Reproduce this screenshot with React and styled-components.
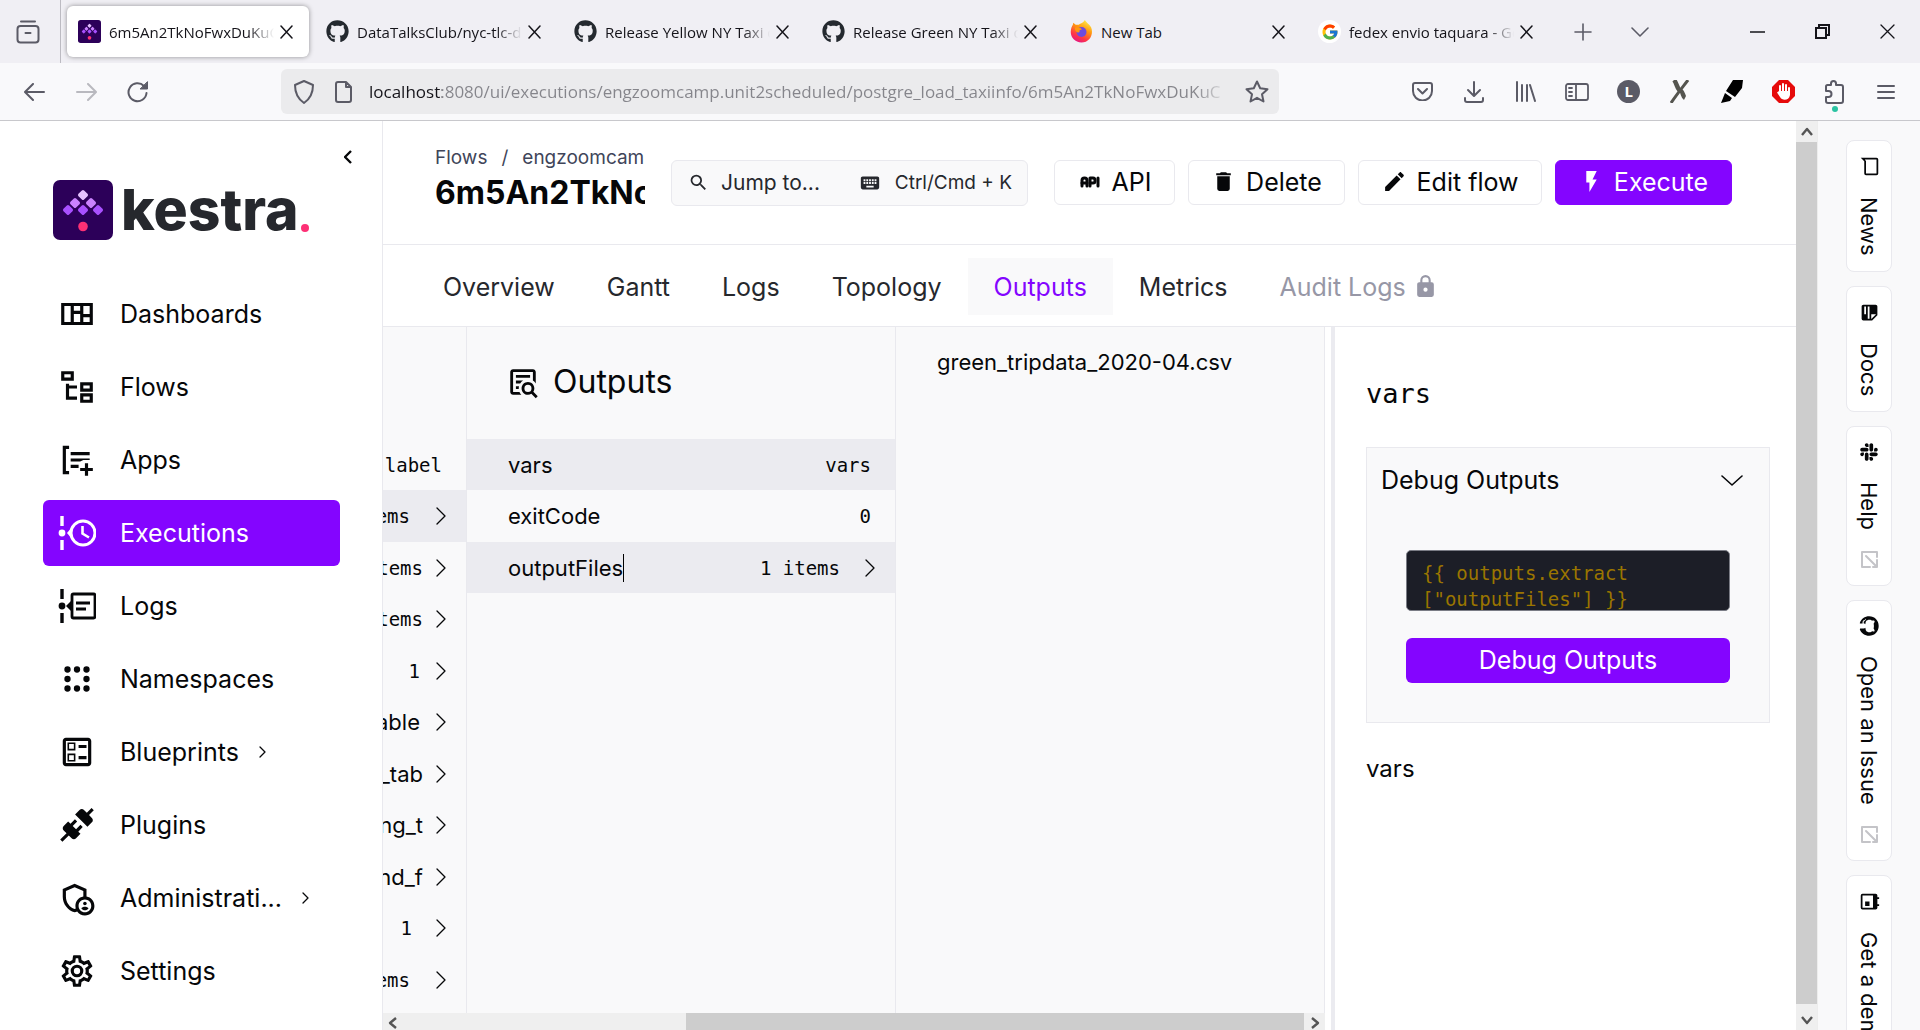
import React from "react";
import styled, { createGlobalStyle, css } from "styled-components";
import { FaGithub, FaSlack } from "react-icons/fa";
import { FcGoogle } from "react-icons/fc";
import { MdOutlineAdminPanelSettings, MdOutlineBallot } from "react-icons/md";
import { TbApi } from "react-icons/tb";

const sans = `Inter, "Liberation Sans", sans-serif`;
const mono = `"DejaVu Sans Mono", "Liberation Mono", monospace`;
const chrome = `"Open Sans", "Noto Sans", sans-serif`;

const violet = "#8405ff";
const line = "#e9e9ee";
const ink = "#060709";

const GlobalStyle = createGlobalStyle`
  *, *::before, *::after { box-sizing: border-box; }
  body { margin: 0; background: #fff; color: ${ink}; font-family: ${sans}; overflow: hidden; }
  button { font: inherit; color: inherit; background: none; border: 0; padding: 0; cursor: pointer; }
  a { color: inherit; text-decoration: none; }
  ul, ol { list-style: none; margin: 0; padding: 0; }
  h1, h2, p { margin: 0; font-weight: 400; }
  svg { display: block; flex: none; }
`;

/* ---------- icons ---------- */

const Glyph = ({ d, size = 24, box = "0 0 24 24" }) => (
  <svg width={size} height={size} viewBox={box} fill="currentColor" aria-hidden="true">
    <path d={d} />
  </svg>
);

const Stroke = ({ d, width, height, weight = 2, box, cap = "round" }) => (
  <svg
    width={width}
    height={height}
    viewBox={box || `0 0 ${width} ${height}`}
    fill="none"
    stroke="currentColor"
    strokeWidth={weight}
    strokeLinecap={cap}
    strokeLinejoin="round"
    aria-hidden="true"
  >
    <path d={d} />
  </svg>
);

const paths = {
  dashboard:
    "M2 5V19H22V5H2M4 7H8V17H4V7M10 7H14V10H10V7M16 7H20V12H16V7M10 12H14V17H10V12M16 14H20V17H16V14",
  tree:
    "M12 13H7v5h5v2H5V10h2v1h5v2M8 4v2H4V4h4m2-2H2v6h8V2m10 9v2h-4v-2h4m2-2h-8v6h8V9m-2 9v2h-4v-2h4m2-2h-8v6h8v-6z",
  apps:
    "M3 3H7V5H5V19H7V21H3V3M8 7H20V9H8V7M8 11H20V12H16L14 13H8V11M8 15H13V17H8V15M17 14H19V17H22V19H19V22H17V19H14V17H17V14Z",
  dots:
    "M6 4a2 2 0 1 1 0 4a2 2 0 0 1 0-4M12 4a2 2 0 1 1 0 4a2 2 0 0 1 0-4M18 4a2 2 0 1 1 0 4a2 2 0 0 1 0-4M6 10a2 2 0 1 1 0 4a2 2 0 0 1 0-4M18 10a2 2 0 1 1 0 4a2 2 0 0 1 0-4M6 16a2 2 0 1 1 0 4a2 2 0 0 1 0-4M12 16a2 2 0 1 1 0 4a2 2 0 0 1 0-4M18 16a2 2 0 1 1 0 4a2 2 0 0 1 0-4",
  plug:
    "M21.4 7.5C22.2 8.3 22.2 9.6 21.4 10.3L18.6 13.1L10.8 5.3L13.6 2.5C14.4 1.7 15.7 1.7 16.4 2.5L18.2 4.3L21.2 1.3L22.6 2.7L19.6 5.7L21.4 7.5M15.6 13.3L14.2 11.9L11.4 14.7L9.3 12.6L12.1 9.8L10.7 8.4L7.9 11.2L6.4 9.8L3.6 12.6C2.8 13.4 2.8 14.7 3.6 15.4L5.4 17.2L1.4 21.2L2.8 22.6L6.8 18.6L8.6 20.4C9.4 21.2 10.7 21.2 11.4 20.4L14.2 17.6L12.8 16.2L15.6 13.3Z",
  cog:
    "M12,8A4,4 0 0,1 16,12A4,4 0 0,1 12,16A4,4 0 0,1 8,12A4,4 0 0,1 12,8M12,10A2,2 0 0,0 10,12A2,2 0 0,0 12,14A2,2 0 0,0 14,12A2,2 0 0,0 12,10M10,22C9.75,22 9.54,21.82 9.5,21.58L9.13,18.93C8.5,18.68 7.96,18.34 7.44,17.94L4.95,18.95C4.73,19.03 4.46,18.95 4.34,18.73L2.34,15.27C2.21,15.05 2.27,14.78 2.46,14.63L4.57,12.97L4.5,12L4.57,11L2.46,9.37C2.27,9.22 2.21,8.95 2.34,8.73L4.34,5.27C4.46,5.05 4.73,4.96 4.95,5.05L7.44,6.05C7.96,5.66 8.5,5.32 9.13,5.07L9.5,2.42C9.54,2.18 9.75,2 10,2H14C14.25,2 14.46,2.18 14.5,2.42L14.87,5.07C15.5,5.32 16.04,5.66 16.56,6.05L19.05,5.05C19.27,4.96 19.54,5.05 19.66,5.27L21.66,8.73C21.79,8.95 21.73,9.22 21.54,9.37L19.43,11L19.5,12L19.43,13L21.54,14.63C21.73,14.78 21.79,15.05 21.66,15.27L19.66,18.73C19.54,18.95 19.27,19.04 19.05,18.95L16.56,17.95C16.04,18.34 15.5,18.68 14.87,18.93L14.5,21.58C14.46,21.82 14.25,22 14,22H10M11.25,4L10.88,6.61C9.68,6.86 8.62,7.5 7.85,8.39L5.44,7.35L4.69,8.65L6.8,10.2C6.4,11.37 6.4,12.64 6.8,13.8L4.68,15.36L5.43,16.66L7.86,15.62C8.63,16.5 9.68,17.14 10.87,17.38L11.24,20H12.76L13.13,17.39C14.32,17.14 15.37,16.5 16.14,15.62L18.57,16.66L19.32,15.36L17.2,13.81C17.6,12.64 17.6,11.37 17.2,10.2L19.31,8.65L18.56,7.35L16.15,8.39C15.38,7.5 14.32,6.86 13.12,6.62L12.75,4H11.25Z",
  search:
    "M9.5,3A6.5,6.5 0 0,1 16,9.5C16,11.11 15.41,12.59 14.44,13.73L14.71,14H15.5L20.5,19L19,20.5L14,15.5V14.71L13.73,14.44C12.59,15.41 11.11,16 9.5,16A6.5,6.5 0 0,1 3,9.5A6.5,6.5 0 0,1 9.5,3M9.5,5C7,5 5,7 5,9.5C5,12 7,14 9.5,14C12,14 14,12 14,9.5C14,7 12,5 9.5,5Z",
  keyboard:
    "M19,10H17V8H19M19,13H17V11H19M16,10H14V8H16M16,13H14V11H16M16,17H8V15H16M7,10H5V8H7M7,13H5V11H7M8,11H10V13H8M8,8H10V10H8M11,11H13V13H11M11,8H13V10H11M20,5H4C2.89,5 2,5.89 2,7V17A2,2 0 0,0 4,19H20A2,2 0 0,0 22,17V7C22,5.89 21.1,5 20,5Z",
  trash: "M19,4H15.5L14.5,3H9.5L8.5,4H5V6H19M6,19A2,2 0 0,0 8,21H16A2,2 0 0,0 18,19V7H6V19Z",
  pencil:
    "M20.71,7.04C21.1,6.65 21.1,6 20.71,5.63L18.37,3.29C18,2.9 17.35,2.9 16.96,3.29L15.12,5.12L18.87,8.87M3,17.25V21H6.75L17.81,9.93L14.06,6.18L3,17.25Z",
  flash: "M7,2V13H10V22L17,10H13L17,2H7Z",
  lock:
    "M12,17A2,2 0 0,0 14,15C14,13.89 13.1,13 12,13A2,2 0 0,0 10,15A2,2 0 0,0 12,17M18,8A2,2 0 0,1 20,10V20A2,2 0 0,1 18,22H6A2,2 0 0,1 4,20V10C4,8.89 4.9,8 6,8H7V6A5,5 0 0,1 12,1A5,5 0 0,1 17,6V8H18M12,3A3,3 0 0,0 9,6V8H15V6A3,3 0 0,0 12,3Z",
  textSearch:
    "M15.5,12C18,12 20,14 20,16.5C20,17.38 19.75,18.21 19.31,18.9L22.39,22L21,23.39L17.88,20.32C17.19,20.75 16.37,21 15.5,21C13,21 11,19 11,16.5C11,14 13,12 15.5,12M15.5,14A2.5,2.5 0 0,0 13,16.5A2.5,2.5 0 0,0 15.5,19A2.5,2.5 0 0,0 18,16.5A2.5,2.5 0 0,0 15.5,14M5,3H19C20.11,3 21,3.89 21,5V13.03C20.5,12.23 19.81,11.54 19,11V5H5V19H9.5C9.81,19.75 10.26,20.42 10.81,21H5C3.89,21 3,20.11 3,19V5C3,3.89 3.89,3 5,3M7,7H17V9H7V7M7,11H12.03C11.23,11.5 10.54,12.19 10,13H7V11M7,15H9.17C9.06,15.5 9,16 9,16.5V17H7V15Z",
  message: "M20 2H4A2 2 0 0 0 2 4V22L6 18H20A2 2 0 0 0 22 16V4A2 2 0 0 0 20 2M20 16H6L4 17.2V4H20V16Z",
  note: "M14 10H19.5L14 4.5V10M5 3H15L21 9V19A2 2 0 0 1 19 21H5C3.89 21 3 20.1 3 19V5C3 3.89 3.89 3 5 3M5 12V14H19V12H5M5 16V18H14V16H5Z",
  calendar:
    "M7 1V3H5A2 2 0 0 0 3 5V20A2 2 0 0 0 5 22H19A2 2 0 0 0 21 20V5A2 2 0 0 0 19 3H17V1H15V3H9V1H7M5 8H19V20H5V8M12 12H17V17H12V12Z",
};

const TimelineClock = () => (
  <svg width="38" height="34" viewBox="0 0 38 34" fill="none" stroke="currentColor" aria-hidden="true">
    <path d="M4 0V10M4 24V34" strokeWidth="3.4" />
    <circle cx="4" cy="17" r="3.4" fill="currentColor" stroke="none" />
    <path d="M9 17L14 11V23Z" fill="currentColor" stroke="none" />
    <circle cx="25" cy="17" r="12" strokeWidth="3" />
    <path d="M24.5 10V17.5L31 21.5" strokeWidth="2.6" />
  </svg>
);

const TimelineText = () => (
  <svg width="38" height="34" viewBox="0 0 38 34" fill="none" stroke="currentColor" aria-hidden="true">
    <path d="M4 0V10M4 24V34" strokeWidth="3.4" />
    <circle cx="4" cy="17" r="3.4" fill="currentColor" stroke="none" />
    <path d="M8 17L13 12V22Z" fill="currentColor" stroke="none" />
    <rect x="14" y="5" width="23" height="24" rx="1.5" strokeWidth="2.8" />
    <path d="M18 14H32M18 20H28" strokeWidth="2.8" />
  </svg>
);

const KestraMark = ({ size }) => (
  <svg width={size} height={size} viewBox="0 0 60 60" aria-hidden="true">
    <rect width="60" height="60" rx="7" fill="#2c0059" />
    {[
      [30, 15, "#e5c1ff"],
      [22, 23, "#cb82ff"],
      [38, 23, "#cb82ff"],
      [15, 30, "#a950ff"],
      [30, 30, "#a950ff"],
      [45, 30, "#a950ff"],
    ].map(([x, y, fill]) => (
      <rect
        key={`${x}-${y}`}
        x={x - 4}
        y={y - 4}
        width="8"
        height="8"
        rx="1.6"
        fill={fill}
        transform={`rotate(45 ${x} ${y})`}
      />
    ))}
    <circle cx="30" cy="46.500" r="4.800" fill="#fd3075" />
  </svg>
);

const FirefoxMark = () => (
  <svg width="23" height="23" viewBox="0 0 24 24" aria-hidden="true">
    <defs>
      <linearGradient id="fx-flame" x1="0.8" y1="0" x2="0.3" y2="1">
        <stop offset="0" stopColor="#fff44f" />
        <stop offset="0.4" stopColor="#ff980e" />
        <stop offset="0.75" stopColor="#ff3647" />
        <stop offset="1" stopColor="#e31587" />
      </linearGradient>
    </defs>
    <path
      d="M15.500 0C17 3 20 4 22 7.500C25 15 20.500 23.500 12 23.500C5 23.500 .5 18 .8 12C.9 9 2 6.500 3 5L3.400 2.800L6 5L9 5C11 3.500 14 3 15.500 0Z"
      fill="url(#fx-flame)"
    />
    <circle cx="12" cy="12.500" r="5.200" fill="#6d4be0" />
    <path d="M5 8C8 7 11 8 12.500 10C10 10 9.500 11.500 10 12.500C8 14 5 12 5 8Z" fill="#ff980e" />
  </svg>
);

/* ---------- browser frame ---------- */

const Shell = styled.div`
  display: flex;
  flex-direction: column;
  height: 100vh;
`;

const TabStrip = styled.div`
  display: flex;
  align-items: stretch;
  height: 63px;
  flex: none;
  background: #f0eff4;
  color: #15141a;
  font: 15px/20px ${chrome};
`;

const ViewButton = styled.button`
  display: flex;
  align-items: center;
  justify-content: center;
  width: 61px;
  padding-right: 4px;
  border-right: 1px solid #bcbbc2;
  color: #5b5b66;
`;

const TabList = styled.ul`
  display: flex;
  align-items: center;
  gap: 6px;
  padding: 0 5px 0 6px;
`;

const BrowserTab = styled.li`
  display: flex;
  align-items: center;
  width: 242px;
  height: 51px;
  padding: 0 16px 0 11px;
  gap: 8px;
  border-radius: 6px;
  ${(p) =>
    p.$active &&
    css`
      background: #fff;
      box-shadow: 0 0 5px rgba(0, 0, 0, 0.4);
    `}
`;

const TabTitle = styled.span`
  flex: 1;
  min-width: 0;
  overflow: hidden;
  white-space: nowrap;
  ${(p) =>
    p.$fade &&
    css`
      mask-image: linear-gradient(to right, #000 calc(100% - 32px), transparent calc(100% - 6px));
    `}
`;

const TabClose = styled.button`
  margin-left: -8px;
`;

const RoundIcon = styled.span`
  display: grid;
  place-items: center;
  width: 23px;
  height: 23px;
  border-radius: 50%;
  background: #fff;
`;

const StripButton = styled.button`
  display: flex;
  align-items: center;
  justify-content: center;
  width: 57px;
  color: #5b5b66;
`;

const WindowControls = styled.div`
  display: flex;
  margin-left: auto;
`;

const WindowButton = styled.button`
  display: flex;
  align-items: center;
  justify-content: center;
  width: 65px;
`;

const Toolbar = styled.div`
  display: flex;
  align-items: center;
  height: 58px;
  flex: none;
  padding: 0 8px;
  background: #f9f9fb;
  border-bottom: 1px solid #c8c8cc;
  color: #5b5b66;
`;

const ToolButton = styled.button`
  display: flex;
  flex-direction: column;
  align-items: center;
  justify-content: center;
  width: 52px;
  height: 45px;
  position: relative;
  opacity: ${(p) => (p.disabled ? 0.4 : 1)};
`;

const Notice = styled.span`
  position: absolute;
  bottom: 2px;
  width: 6px;
  height: 6px;
  border-radius: 3px;
  background: #2ac3a2;
`;

const AddressBar = styled.label`
  display: flex;
  align-items: center;
  flex: 1;
  height: 45px;
  margin: 0 118px 0 117px;
  padding: 0 10px 0 12px;
  border-radius: 6px;
  background: #ebebed;
`;

const AddressInput = styled.input`
  flex: 1;
  min-width: 0;
  margin: 0 10px 0 17px;
  padding: 0;
  border: 0;
  outline: 0;
  font: 17px/24px ${chrome};
  color: transparent;
  background-image: linear-gradient(
    to right,
    #15141a 73px,
    #85858b 73px,
    #85858b calc(100% - 40px),
    transparent
  );
  background-clip: text;
`;

const PageIcon = styled.span`
  margin-left: 20px;
`;

const Tools = styled.div`
  display: flex;
  width: 515px;

  ${ToolButton} {
    flex: 1;
  }
`;

const Avatar = styled.span`
  display: grid;
  place-items: center;
  width: 23px;
  height: 23px;
  border-radius: 50%;
  background: #5b5b66;
  color: #fff;
  font: 700 15px/23px ${chrome};
`;

const browserTabs = [
  { title: "6m5An2TkNoFwxDuKuC", icon: <KestraMark size={23} />, active: true },
  { title: "DataTalksClub/nyc-tlc-da", icon: <FaGithub size={23} color="#24292f" /> },
  { title: "Release Yellow NY Taxi da", icon: <FaGithub size={23} color="#24292f" /> },
  { title: "Release Green NY Taxi da", icon: <FaGithub size={23} color="#24292f" /> },
  { title: "New Tab", icon: <FirefoxMark />, plain: true },
  {
    title: "fedex envio taquara - Go",
    icon: (
      <RoundIcon>
        <FcGoogle size={18} />
      </RoundIcon>
    ),
  },
];

const BrowserFrame = () => (
  <>
    <TabStrip>
      <ViewButton aria-label="View recent browsing">
        <svg width="24" height="24" viewBox="0 0 24 24" fill="none" stroke="currentColor" strokeWidth="2" strokeLinecap="round" aria-hidden="true">
          <path d="M5 1.500H19M9.500 13H14.500" />
          <rect x="1.500" y="6" width="21" height="16.500" rx="3" />
        </svg>
      </ViewButton>
      <TabList>
        {browserTabs.map((t) => (
          <BrowserTab key={t.title} $active={t.active}>
            {t.icon}
            <TabTitle $fade={!t.plain}>{t.title}</TabTitle>
            <TabClose aria-label={`Close ${t.title}`}>
              <Stroke d="M1 1L12 13M12 1L1 13" width={13} height={14} weight={1.5} />
            </TabClose>
          </BrowserTab>
        ))}
      </TabList>
      <StripButton aria-label="Open a new tab">
        <Stroke d="M9 1V17M1 9H17" width={18} height={18} weight={1.6} />
      </StripButton>
      <StripButton aria-label="List all tabs">
        <Stroke d="M1 1L9 9L17 1" width={18} height={10} weight={1.6} />
      </StripButton>
      <WindowControls>
        <WindowButton aria-label="Minimize">
          <Stroke d="M0 1H15" width={15} height={2} weight={1.4} />
        </WindowButton>
        <WindowButton aria-label="Restore">
          <svg width="15" height="15" viewBox="0 0 15 15" fill="none" stroke="currentColor" strokeWidth="2" aria-hidden="true">
            <path d="M1 4H11V14H1ZM4 4V1H14V11H11" />
          </svg>
        </WindowButton>
        <WindowButton aria-label="Close window">
          <Stroke d="M1 1L14 14M14 1L1 14" width={15} height={15} weight={1.3} />
        </WindowButton>
      </WindowControls>
    </TabStrip>
    <Toolbar>
      <ToolButton aria-label="Back">
        <Stroke d="M20 9H2M9 1L1 9L9 17" width={21} height={18} />
      </ToolButton>
      <ToolButton aria-label="Forward" disabled>
        <Stroke d="M1 9H19M12 1L20 9L12 17" width={21} height={18} />
      </ToolButton>
      <ToolButton aria-label="Reload">
        <svg width="22" height="22" viewBox="0 0 22 22" fill="none" stroke="currentColor" strokeWidth="2" strokeLinecap="round" aria-hidden="true">
          <path d="M19.500 12A9 9 0 1 1 17 5" />
          <path d="M20.500 1V8H13.500Z" fill="currentColor" strokeWidth="1" strokeLinejoin="round" />
        </svg>
      </ToolButton>
      <AddressBar>
        <Stroke d="M11 1L20 5C20 13 17 19 11 23C5 19 2 13 2 5Z" width={22} height={24} />
        <PageIcon>
          <Stroke d="M3 1H11L16 6V19A2 2 0 0 1 14 21H3A2 2 0 0 1 1 19V3A2 2 0 0 1 3 1M11 1V6H16" width={17} height={22} />
        </PageIcon>
        <AddressInput
          aria-label="Address"
          readOnly
          value="localhost:8080/ui/executions/engzoomcamp.unit2scheduled/postgre_load_taxiinfo/6m5An2TkNoFwxDuKuC"
        />
        <Stroke
          d="M12 1.500L15.200 8.300L22.500 9.200L17 14.200L18.500 21.500L12 17.800L5.500 21.500L7 14.200L1.500 9.200L8.800 8.300Z"
          width={24}
          height={23}
        />
      </AddressBar>
      <Tools>
        <ToolButton aria-label="Save to Pocket">
          <Stroke d="M3 1H18A2 2 0 0 1 20 3V9A9.500 9.500 0 0 1 1 9V3A2 2 0 0 1 3 1M6 7L10.500 11.500L15 7" width={21} height={19} />
        </ToolButton>
        <ToolButton aria-label="Downloads">
          <Stroke d="M10 1V14M4 9L10 15L16 9M1 17V19A2 2 0 0 0 3 21H17A2 2 0 0 0 19 19V17" width={20} height={22} />
        </ToolButton>
        <ToolButton aria-label="Library">
          <Stroke d="M1 1V20M6 4V20M11 4V20M14 4L19 20" width={20} height={21} />
        </ToolButton>
        <ToolButton aria-label="Sidebars">
          <Stroke d="M3 1H21A2 2 0 0 1 23 3V15A2 2 0 0 1 21 17H3A2 2 0 0 1 1 15V3A2 2 0 0 1 3 1M11 1V17M4 5H7M4 9H7M4 13H7" width={24} height={18} weight={1.8} />
        </ToolButton>
        <ToolButton aria-label="Account">
          <Avatar>L</Avatar>
        </ToolButton>
        <ToolButton aria-label="Extension X">
          <svg width="20" height="23" viewBox="0 0 20 23" fill="none" stroke="#55554f" aria-hidden="true">
            <path d="M4 0C7 3 7 10 11 11C13 12 13 17 15 18" strokeWidth="4.500" />
            <path d="M18 0C12 8 7 14 1 23" strokeWidth="3" />
          </svg>
        </ToolButton>
        <ToolButton aria-label="Highlighter">
          <svg width="22" height="23" viewBox="0 0 22 23" fill="#000" aria-hidden="true">
            <path d="M12 0H22L21 8L14 17L5 11ZM4 13L11 18L9 21L0 23Z" />
          </svg>
        </ToolButton>
        <ToolButton aria-label="Ad blocker">
          <svg width="23" height="23" viewBox="0 0 23 23" aria-hidden="true">
            <path d="M7 0H16L23 7V16L16 23H7L0 16V7Z" fill="#e60b0b" />
            <path d="M8 6V14M11 4V13M14 5V13M17 8V14" stroke="#fff" strokeWidth="2" strokeLinecap="round" />
            <path d="M7 11H18V15C17 21 10 21 8 17L5 12.500Z" fill="#fff" />
          </svg>
        </ToolButton>
        <ToolButton aria-label="Extensions">
          <Stroke d="M2 9V6.500A1.500 1.500 0 0 1 3.500 5H7V3.500A2.500 2.500 0 0 1 12 3.500V5H17A2 2 0 0 1 19 7V21A2 2 0 0 1 17 23H4A2 2 0 0 1 2 21V17H4.500A2.500 2.500 0 0 0 4.500 11H2V9" width={21} height={24} />
          <Notice />
        </ToolButton>
        <ToolButton aria-label="Menu">
          <Stroke d="M1 1H17M1 7H17M1 13H17" width={18} height={14} />
        </ToolButton>
      </Tools>
    </Toolbar>
  </>
);

/* ---------- left navigation ---------- */

const Page = styled.div`
  display: flex;
  flex: 1;
  min-height: 0;
`;

const Sidebar = styled.nav`
  display: flex;
  flex-direction: column;
  width: 383px;
  flex: none;
  border-right: 1px solid ${line};
  background: #fff;
`;

const CollapseButton = styled.button`
  align-self: flex-end;
  margin: 29px 30px 0 0;
`;

const Brand = styled.a`
  display: flex;
  align-items: center;
  gap: 8px;
  height: 60px;
  margin: 16px 0 41px 53px;
`;

const Wordmark = styled.span`
  font: 800 57px/60px ${sans};
  color: #26282d;
`;

const BrandDot = styled.span`
  align-self: flex-end;
  width: 8px;
  height: 8px;
  margin: 0 0 8px -6px;
  border-radius: 4px;
  background: #fd3075;
`;

const NavList = styled.ul`
  display: flex;
  flex-direction: column;
  gap: 7px;
  padding: 0 42px 0 43px;
`;

const NavLink = styled.a`
  display: flex;
  align-items: center;
  height: 66px;
  padding: 0 15px;
  border-radius: 6px;
  font-size: 25px;
  line-height: 32px;
  ${(p) =>
    p.$active &&
    css`
      background: ${violet};
      color: #fff;
    `}
`;

const NavIcon = styled.span`
  display: grid;
  place-items: center;
  width: 38px;
  margin-right: 24px;
`;

const NavCaret = styled.span`
  margin-left: 20px;
`;

const navItems = [
  { label: "Dashboards", icon: <Glyph d={paths.dashboard} size={38} /> },
  { label: "Flows", icon: <Glyph d={paths.tree} size={38} /> },
  { label: "Apps", icon: <Glyph d={paths.apps} size={38} /> },
  { label: "Executions", icon: <TimelineClock />, active: true },
  { label: "Logs", icon: <TimelineText /> },
  { label: "Namespaces", icon: <Glyph d={paths.dots} size={38} /> },
  { label: "Blueprints", icon: <MdOutlineBallot size={38} />, caret: true },
  { label: "Plugins", icon: <Glyph d={paths.plug} size={38} /> },
  { label: "Administrati...", icon: <MdOutlineAdminPanelSettings size={38} />, caret: true },
  { label: "Settings", icon: <Glyph d={paths.cog} size={38} /> },
];

const Navigation = () => (
  <Sidebar aria-label="Main">
    <CollapseButton aria-label="Collapse menu">
      <Stroke d="M7 1L1 7L7 13" width={8} height={14} weight={2.4} cap="butt" />
    </CollapseButton>
    <Brand href="#">
      <KestraMark size={60} />
      <Wordmark>kestra</Wordmark>
      <BrandDot />
    </Brand>
    <NavList>
      {navItems.map((item) => (
        <li key={item.label}>
          <NavLink href="#" $active={item.active}>
            <NavIcon>{item.icon}</NavIcon>
            {item.label}
            {item.caret && (
              <NavCaret>
                <Stroke d="M1 1L6 6L1 11" width={7} height={12} weight={1.3} />
              </NavCaret>
            )}
          </NavLink>
        </li>
      ))}
    </NavList>
  </Sidebar>
);

/* ---------- main area ---------- */

const Main = styled.main`
  display: flex;
  flex-direction: column;
  flex: 1;
  min-width: 0;
`;

const Header = styled.header`
  display: flex;
  align-items: center;
  height: 124px;
  flex: none;
  gap: 26px;
  padding: 0 64px 0 52px;
  border-bottom: 1px solid ${line};
`;

const Heading = styled.div`
  flex: 1;
  min-width: 0;
  overflow: hidden;
  padding-bottom: 6px;
  white-space: nowrap;
`;

const Crumbs = styled.ol`
  display: flex;
  gap: 14px;
  color: #404559;
  font-size: 19px;
  line-height: 26px;
`;

const Title = styled.h1`
  font-size: 32px;
  font-weight: 700;
  line-height: 44px;
`;

const JumpTo = styled.button`
  display: flex;
  align-items: center;
  width: 357px;
  height: 46px;
  padding: 0 15px 0 16px;
  border: 1px solid ${line};
  border-radius: 6px;
  background: #f9f9fa;
  color: #26282d;
  font-size: 21px;
  line-height: 28px;
`;

const JumpLabel = styled.span`
  flex: 1;
  margin-left: 12px;
  text-align: left;
`;

const Shortcut = styled.kbd`
  margin-left: 14px;
  font: 19px/28px ${sans};
`;

const Actions = styled.div`
  display: flex;
  gap: 13px;
`;

const ActionButton = styled.button`
  display: flex;
  align-items: center;
  justify-content: center;
  gap: 10px;
  height: 45px;
  width: ${(p) => p.$width}px;
  padding-bottom: 2px;
  border: 1px solid ${(p) => (p.$primary ? violet : line)};
  border-radius: 6px;
  background: ${(p) => (p.$primary ? violet : "#fff")};
  color: ${(p) => (p.$primary ? "#fff" : ink)};
  font-size: 25px;
  line-height: 32px;
`;

const TabBar = styled.nav`
  display: flex;
  align-items: center;
  height: 82px;
  flex: none;
  padding: 2px 0 0 34px;
  border-bottom: 1px solid ${line};
  font-size: 25px;
  line-height: 32px;
`;

const TabLink = styled.a`
  display: flex;
  align-items: center;
  gap: 7px;
  height: 57px;
  padding: 0 26px;
  color: ${(p) => (p.$active ? violet : p.$muted ? "#9797a6" : "#26282d")};
  background: ${(p) => (p.$active ? "#f9f9fa" : "none")};
`;

const Split = styled.div`
  display: flex;
  flex: 1;
  min-height: 0;
`;

const Browser = styled.section`
  display: flex;
  flex-direction: column;
  width: 942px;
  flex: none;
  margin-right: 6px;
  background: #f9f9fa;
`;

const Columns = styled.div`
  display: flex;
  flex: 1;
  min-height: 0;
`;

const Column = styled.div`
  display: flex;
  flex-direction: column;
  flex: ${(p) => (p.$narrow ? "0 0 84px" : "1")};
  min-width: 0;
  overflow: hidden;
  padding-top: ${(p) => p.$top}px;
  border-right: 1px solid ${line};
`;

const ColumnTitle = styled.h2`
  display: flex;
  align-items: center;
  gap: 13px;
  height: 112px;
  padding: 0 0 3px 39px;
  font-size: 32px;
  line-height: 40px;
`;

const Entry = styled.button`
  display: flex;
  align-items: center;
  justify-content: ${(p) => (p.$end ? "flex-end" : "space-between")};
  width: 100%;
  height: 51px;
  flex: none;
  padding: 0 20px 0 ${(p) => (p.$end ? 0 : 41)}px;
  background: ${(p) => (p.$active ? "#ebebf0" : "none")};
  font-size: 22px;
  line-height: 28px;
  white-space: nowrap;
  &:nth-of-type(even) {
    height: 52px;
  }
`;

const EntryName = styled.span`
  border-right: ${(p) => (p.$caret ? "1px solid #000" : "0")};
`;

const EntryValue = styled.span`
  display: flex;
  align-items: center;
  justify-content: flex-end;
  gap: ${(p) => p.$gap}px;
  padding-right: ${(p) => (p.$gap ? 0 : 4)}px;
  font-family: ${(p) => (p.$name ? sans : mono)};
  font-size: ${(p) => (p.$name ? 22 : 19)}px;
`;

const HTrack = styled.div`
  display: flex;
  height: 17px;
  flex: none;
  align-items: flex-end;
  padding: 0 5px;
  justify-content: space-between;
  background: #efefef;
  color: #555;
`;

const HThumb = styled.div`
  width: 618px;
  height: 17px;
  margin: 0 6px 0 auto;
  background: #cdcdcd;
`;

const Divider = styled.div`
  width: 4px;
  flex: none;
  background: #ebebf0;
`;

const Details = styled.aside`
  flex: 1;
  min-width: 0;
  padding: 46px 26px 0 31px;
`;

const DetailsTitle = styled.h2`
  font: 27px/42px ${mono};
`;

const DebugCard = styled.section`
  margin: 32px 0 28px;
  padding: 11px 39px 39px;
  border: 1px solid ${line};
  background: #f9f9fa;
`;

const DebugToggle = styled.button`
  display: flex;
  align-items: center;
  justify-content: space-between;
  width: calc(100% + 38px);
  height: 42px;
  margin: 0 -12px 49px -25px;
  font-size: 25px;
  line-height: 32px;
`;

const Editor = styled.textarea`
  display: block;
  width: 100%;
  height: 61px;
  padding: 9px 15px 0;
  border: 1px solid #7a7c85;
  border-radius: 5px;
  outline: 0;
  overflow: hidden;
  resize: none;
  background: #1c1e27;
  color: #9a7500;
  font: 19px/26px ${mono};
`;

const DebugButton = styled.button`
  display: block;
  width: 100%;
  height: 45px;
  margin-top: 27px;
  border-radius: 6px;
  background: ${violet};
  color: #fff;
  font-size: 25px;
  line-height: 45px;
`;

const DetailsValue = styled.p`
  font-size: 24px;
  line-height: 36px;
`;

const VTrack = styled.div`
  display: flex;
  flex-direction: column;
  align-items: center;
  width: 22px;
  flex: none;
  border-right: 1px solid #ededed;
  background: #efefef;
  color: #555;
`;

const VThumb = styled.div`
  width: 100%;
  flex: 1;
  background: #cdcdcd;
`;

const ScrollStep = styled.button`
  display: grid;
  place-items: center;
  height: ${(p) => p.$height}px;
  padding-top: ${(p) => p.$drop || 0}px;
`;

const Chevron = () => <Stroke d="M1 1L9 9L1 17" width={10} height={18} weight={1.3} />;

const tabs = [
  { label: "Overview" },
  { label: "Gantt" },
  { label: "Logs" },
  { label: "Topology" },
  { label: "Outputs", active: true },
  { label: "Metrics" },
  { label: "Audit Logs", muted: true },
];

const parents = [
  { text: "label", leaf: true },
  { text: "ems", gap: 26, active: true },
  { text: "tems", gap: 13 },
  { text: "tems", gap: 13 },
  { text: "1", gap: 16 },
  { text: "able", gap: 16, name: true },
  { text: "_tab", gap: 13, name: true },
  { text: "ng_t", gap: 13, name: true },
  { text: "nd_f", gap: 13, name: true },
  { text: "1", gap: 24 },
  { text: "ems", gap: 26 },
];

const OutputsBrowser = () => (
  <Browser>
    <Columns>
      <Column $narrow $top={112}>
        {parents.map((row, i) => (
          <Entry key={i} $end $active={row.active}>
            <EntryValue $gap={row.gap} $name={row.name}>
              {row.text}
              {!row.leaf && <Chevron />}
            </EntryValue>
          </Entry>
        ))}
      </Column>
      <Column $top={0}>
        <ColumnTitle>
          <Glyph d={paths.textSearch} size={34} />
          Outputs
        </ColumnTitle>
        <Entry $active>
          <EntryName>vars</EntryName>
          <EntryValue>vars</EntryValue>
        </Entry>
        <Entry>
          <EntryName>exitCode</EntryName>
          <EntryValue>0</EntryValue>
        </Entry>
        <Entry $active>
          <EntryName $caret>outputFiles</EntryName>
          <EntryValue $gap={25}>
            1 items
            <Chevron />
          </EntryValue>
        </Entry>
      </Column>
      <Column $top={9}>
        <Entry>
          <EntryName>green_tripdata_2020-04.csv</EntryName>
        </Entry>
      </Column>
    </Columns>
    <HTrack>
      <ScrollStep aria-label="Scroll left" $height={15}>
        <Stroke d="M8 1L2 6L8 11" width={10} height={12} weight={2.4} cap="butt" />
      </ScrollStep>
      <HThumb />
      <ScrollStep aria-label="Scroll right" $height={15}>
        <Stroke d="M2 1L8 6L2 11" width={10} height={12} weight={2.4} cap="butt" />
      </ScrollStep>
    </HTrack>
  </Browser>
);

const Execution = () => (
  <Main>
    <Header>
      <Heading>
        <Crumbs>
          <li><a href="#">Flows</a></li>
          <li aria-hidden="true">/</li>
          <li><a href="#">engzoomcam</a></li>
        </Crumbs>
        <Title>6m5An2TkNo</Title>
      </Heading>
      <JumpTo>
        <Glyph d={paths.search} size={21} />
        <JumpLabel>Jump to...</JumpLabel>
        <Glyph d={paths.keyboard} size={22} />
        <Shortcut>Ctrl/Cmd + K</Shortcut>
      </JumpTo>
      <Actions>
        <ActionButton $width={121}>
          <TbApi size={24} strokeWidth={3} />
          API
        </ActionButton>
        <ActionButton $width={157}>
          <Glyph d={paths.trash} size={25} />
          Delete
        </ActionButton>
        <ActionButton $width={184}>
          <Glyph d={paths.pencil} size={25} />
          Edit flow
        </ActionButton>
        <ActionButton $width={177} $primary>
          <Glyph d={paths.flash} size={25} />
          Execute
        </ActionButton>
      </Actions>
    </Header>
    <TabBar aria-label="Execution">
      {tabs.map((t) => (
        <TabLink key={t.label} href="#" $active={t.active} $muted={t.muted}>
          {t.label}
          {t.muted && <Glyph d={paths.lock} size={25} />}
        </TabLink>
      ))}
    </TabBar>
    <Split>
      <OutputsBrowser />
      <Divider />
      <Details>
        <DetailsTitle>vars</DetailsTitle>
        <DebugCard>
          <DebugToggle aria-expanded="true">
            Debug Outputs
            <Stroke d="M1 1L11 10L21 1" width={22} height={11} weight={1.6} />
          </DebugToggle>
          <Editor
            aria-label="Expression"
            readOnly
            spellCheck={false}
            value={'{{ outputs.extract\n["outputFiles"] }}'}
          />
          <DebugButton>Debug Outputs</DebugButton>
        </DebugCard>
        <DetailsValue>vars</DetailsValue>
      </Details>
    </Split>
  </Main>
);

/* ---------- right rail ---------- */

const Rail = styled.aside`
  display: flex;
  flex-direction: column;
  gap: 14px;
  width: 102px;
  flex: none;
  overflow: hidden;
  padding: 19px 28px 0;
  background: #f9f9fa;
`;

const RailButton = styled.button`
  display: flex;
  align-items: center;
  flex: none;
  gap: 20px;
  width: 46px;
  padding: 15px 0;
  border: 1px solid ${line};
  border-radius: 8px;
  background: #fff;
  writing-mode: vertical-rl;
  font-size: 22px;
  line-height: 28px;
  white-space: nowrap;
`;

const Turned = styled.span`
  transform: rotate(90deg);
  color: ${(p) => (p.$faint ? "#c4c4c8" : "inherit")};
`;

const rail = [
  { label: "News", icon: <Glyph d={paths.message} size={21} /> },
  { label: "Docs", icon: <Glyph d={paths.note} size={21} /> },
  { label: "Help", icon: <FaSlack size={20} />, external: true },
  { label: "Open an Issue", icon: <FaGithub size={20} />, external: true },
  { label: "Get a demo", icon: <Glyph d={paths.calendar} size={21} /> },
];

const RightRail = () => (
  <Rail>
    {rail.map((item) => (
      <RailButton key={item.label}>
        <Turned>{item.icon}</Turned>
        {item.label}
        {item.external && (
          <Turned $faint>
            <Stroke d="M7 2H2V17H17V9M10 2H17V6M16 3L6 13" width={20} height={20} weight={2} />
          </Turned>
        )}
      </RailButton>
    ))}
  </Rail>
);

export default function App() {
  return (
    <Shell>
      <GlobalStyle />
      <BrowserFrame />
      <Page>
        <Navigation />
        <Execution />
        <VTrack>
          <ScrollStep aria-label="Scroll up" $height={21}>
            <Stroke d="M1 8L6 2L11 8" width={12} height={10} weight={2.4} cap="butt" />
          </ScrollStep>
          <VThumb />
          <ScrollStep aria-label="Scroll down" $height={26} $drop={5}>
            <Stroke d="M1 2L6 8L11 2" width={12} height={10} weight={2.4} cap="butt" />
          </ScrollStep>
        </VTrack>
        <RightRail />
      </Page>
    </Shell>
  );
}
